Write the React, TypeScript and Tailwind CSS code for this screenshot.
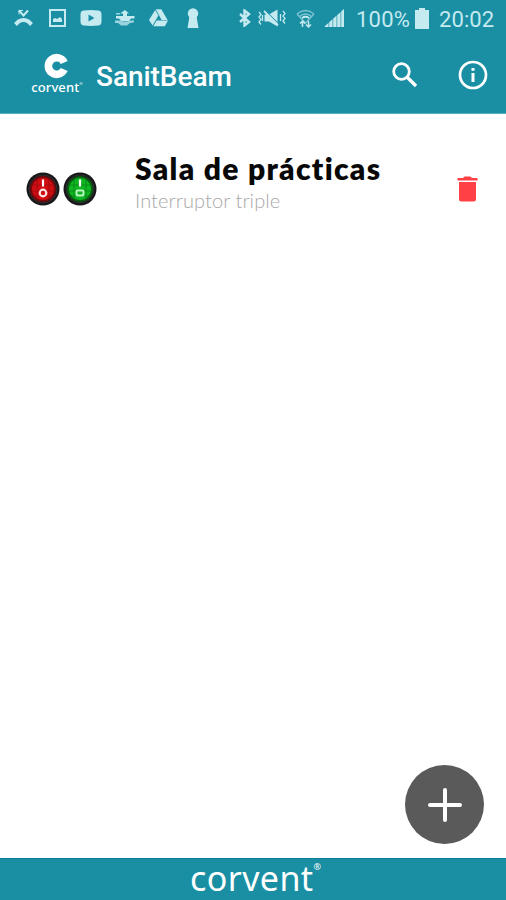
import * as React from 'react';

function StatusBar() {
	return (
		<div className="flex h-9 shrink-0 items-center text-[#c5eaf0]">
			{/* Notifications */}
			<svg className="ml-3.5 w-[19px] shrink-0" height="18" viewBox="0 0 19 18" fill="none" stroke="currentColor">
				<path d="M5 1.500l4.500 5 4.500-5" strokeWidth="2" />
				<path d="M5 1v4.500M5 1.500h4" strokeWidth="1" />
				<path d="M1.500 15.500l3-3q5-3 10 0l3 3" strokeWidth="4" />
			</svg>
			<svg className="ml-4 w-[17px] shrink-0" height="18" viewBox="0 0 17 18">
				<rect x="1" y="1" width="15" height="16" fill="none" stroke="currentColor" strokeWidth="2" />
				<path d="M4 13V10l2-1 2 1 3-2 2 2v3z" fill="currentColor" />
			</svg>
			<svg className="ml-3.5 w-[22px] shrink-0" height="16" viewBox="0 0 22 16">
				<path
					d="M4 .5Q11-.3 18 .5q3.500 0 3.500 4v7q0 4-3.500 4-7 .8-14 0-3.500 0-3.500-4v-7q0-4 3.500-4zM8.500 4.500v7l6-3.500z"
					fill="currentColor"
					fillRule="evenodd"
				/>
			</svg>
			<svg className="ml-[13px] w-5 shrink-0" height="16" viewBox="0 0 20 16" fill="currentColor">
				<path d="M10 0l4 3.500h-2V6h7.500v2.500H16L14 11H6L4 8.500H1V6h7V3.500H5z" />
				<path d="M1 3h4v1.500H1zM0 10.500h5l3 1h4l3-1h4v2l-4 .5-3 2.500H6L3 13H0z" opacity=".75" />
			</svg>
			<svg className="ml-3.5 w-[19px] shrink-0" height="18" viewBox="0 0 19 18" fill="currentColor">
				<path d="M6.200 1l3.200 5.400L3.600 16.500 0 11z" />
				<path d="M6.800 .3h5.500L18.600 11h-6z" />
				<path d="M7.600 11.600h11.400l-3.200 5.700H4.300z" />
			</svg>
			<svg className="ml-[19px] w-3 shrink-0" height="20" viewBox="0 0 12 20" fill="currentColor">
				<circle cx="6" cy="5.500" r="5.200" />
				<path d="M2.500 8h7l2 12H.5z" />
			</svg>

			{/* Radios and sound */}
			<svg className="ml-10 w-3 shrink-0" height="18" viewBox="0 0 12 18" fill="none" stroke="currentColor" strokeWidth="2.400">
				<path d="M1 5l9 8-4.500 3.500v-15L10 5l-9 8" />
			</svg>
			<svg className="ml-[7px] w-7 shrink-0" height="18" viewBox="0 0 28 18">
				<path d="M6.500 5.500H11l8.500-5v17L11 12.500H6.500z" fill="currentColor" />
				<path d="M7 1.500l14 14" stroke="#1a8fa4" strokeWidth="1.500" />
				<path d="M6 2l14 14" stroke="currentColor" strokeWidth="1.800" />
				<path
					d="M1 3l2 2.500L1 8l2 2.500L1 13l2 2.500M4.500 6v6M25 2l2 2.500L25 7l2 2.500L25 12l2 2.500M22.500 5v7"
					fill="none"
					stroke="currentColor"
					strokeWidth="1.300"
				/>
			</svg>
			<svg className="ml-2.5 w-[19px] shrink-0" height="19" viewBox="0 0 19 19" fill="none" stroke="currentColor">
				<g opacity=".6" strokeWidth="1.300">
					<path d="M1 5q8.500-7 17 0M3.500 7.500q6-5 12 0" />
					<path d="M1 5l8.500 9L18 5" />
				</g>
				<path d="M6 9q3.500-2.500 7 0" strokeWidth="1.800" />
				<path d="M6.500 18v-6m-2.500 2.500L6.500 12 9 14.500M12.500 12v6M10 15.500l2.500 2.500 2.500-2.500" strokeWidth="1.500" />
			</svg>
			<svg className="ml-[9px] w-5 shrink-0" height="18" viewBox="0 0 20 18" fill="currentColor">
				<path d="M0 18L20 0v18z" opacity=".55" />
				<path d="M1 17l3-2.500V18H1zM5.500 13l2.500-2.200V18H5.500zM9.500 9.500L12 7.200V18H9.500zM13.500 6L16 3.700V18h-2.500zM17.500 2.500L20 0v18h-2.500z" />
			</svg>
			<span className="ml-3 mt-[3px] w-[55px] whitespace-nowrap text-[22px] leading-none tracking-[0.2px]">100%</span>
			<svg className="ml-[4px] w-3.5 shrink-0" height="21" viewBox="0 0 14 21" fill="currentColor">
				<path d="M4 0h6v2h4v19H0V2h4z" />
			</svg>
			<span className="ml-[10px] mt-[3px] whitespace-nowrap text-[22px] leading-none tracking-[0.1px]">20:02</span>
		</div>
	);
}

function AppLogo() {
	return (
		<div className="-mt-[3px] flex w-[52px] flex-col items-center">
			<svg width="26" height="26" viewBox="0 0 26 26" fill="none">
				<path d="M20.200 9.500A8.300 8.300 0 1 0 20.200 16.500" stroke="white" strokeWidth="7.600" />
			</svg>
			<div className="mt-0.5 flex font-['Noto_Sans'] text-[13px] leading-[13px] font-medium tracking-[0.1px]">
				corvent<span className="text-[4px] leading-[6px]">®</span>
			</div>
		</div>
	);
}

function AppBar() {
	return (
		<div className="flex h-[77px] shrink-0 items-center text-white">
			<div className="ml-[31px]">
				<AppLogo />
			</div>
			<h1 className="mt-[5px] ml-[13px] whitespace-nowrap text-[28px] leading-none font-medium tracking-[-0.05px]">SanitBeam</h1>
			<button className="mr-10 ml-auto">
				<svg width="27" height="27" viewBox="0 0 27 27" fill="none" stroke="white">
					<circle cx="10.500" cy="10.500" r="7.800" strokeWidth="2.800" />
					<path d="M16 16l9 9" strokeWidth="3.400" />
				</svg>
			</button>
			<button className="mr-[18px]">
				<svg width="30" height="30" viewBox="0 0 30 30">
					<circle cx="15" cy="15" r="13" fill="none" stroke="white" strokeWidth="2.700" />
					<path d="M13.500 8h3v2.700h-3zM13.500 13h3v9h-3z" fill="white" />
				</svg>
			</button>
		</div>
	);
}

interface RockerSwitchProps {
	color: string;
	dark: string;
	lit?: boolean;
}

function RockerSwitch({ color, dark, lit }: RockerSwitchProps) {
	return (
		<svg width="34" height="34" viewBox="0 0 34 34">
			<circle cx="17" cy="17" r="16.500" fill="#171719" />
			<circle cx="17" cy="17" r="14" fill="none" stroke="#303032" strokeWidth="1" />
			<circle cx="17" cy="17" r="12" fill={color} stroke={dark} strokeWidth="2" />
			<path d="M6 13h22M6 19h22M8 24h18M11 7v20M23 7v20" stroke={dark} strokeWidth="1" opacity=".45" />
			<path d="M17 7.500v7" stroke="white" strokeWidth="2.200" />
			{lit ? (
				<rect x="13.500" y="18.500" width="7" height="5" rx="1" fill="none" stroke="#b9ffc0" strokeWidth="1.900" />
			) : (
				<circle cx="17" cy="21" r="3.300" fill="none" stroke="#ffe3e3" strokeWidth="2.200" />
			)}
		</svg>
	);
}

function DeviceRow() {
	return (
		<div className="flex h-[110px] items-start">
			<div className="mt-[58px] ml-[26px] flex gap-[3px]">
				<RockerSwitch color="#d10d12" dark="#77090c" />
				<RockerSwitch color="#10b522" dark="#07600f" lit />
			</div>
			<div className="mt-9 ml-[38px] whitespace-nowrap font-['Lato']">
				<h2 className="text-[30px] leading-[36px] font-extrabold tracking-[1.3px] text-[#080808]">Sala de prácticas</h2>
				<p className="mt-[2px] text-[20px] leading-6 font-light tracking-[0.1px] text-[#a8a8a8]">Interruptor triple</p>
			</div>
			<button className="mt-[62px] mr-[28px] ml-auto">
				<svg width="21" height="26" viewBox="0 0 21 26" fill="#ff4145">
					<path d="M.5 2H6l1.500-1.500h6L15 2h5.500v2.500H.5zM2 6h17v17q0 2.500-2.500 2.500h-12Q2 25.500 2 23z" />
				</svg>
			</button>
		</div>
	);
}

export default function App() {
	return (
		<div className="flex h-[900px] w-[506px] flex-col overflow-hidden bg-white font-['Roboto',sans-serif]">
			<header className="h-[114px] shrink-0 border-b border-[#58aebd] bg-[#1a8fa4]">
				<StatusBar />
				<AppBar />
			</header>
			<main className="flex flex-1 flex-col">
				<DeviceRow />
				<button className="mt-auto mr-[22px] mb-[14px] flex size-[79px] items-center justify-center self-end rounded-full bg-[#5a5a5a]">
					<svg width="36" height="36" viewBox="0 0 36 36" stroke="white" strokeWidth="4" strokeLinecap="round">
						<path d="M18 3v30M3 18h30" />
					</svg>
				</button>
			</main>
			<footer className="flex h-[42px] shrink-0 justify-center border-t border-[#087e97] bg-[#1a8fa4] text-white">
				<div className="mt-[2px] ml-[5px] flex font-['Noto_Sans'] text-[34px] leading-[34px] tracking-[0.4px]">
					corvent
					<span className="mt-px text-[9px] leading-[10px] tracking-normal">®</span>
				</div>
			</footer>
		</div>
	);
}
